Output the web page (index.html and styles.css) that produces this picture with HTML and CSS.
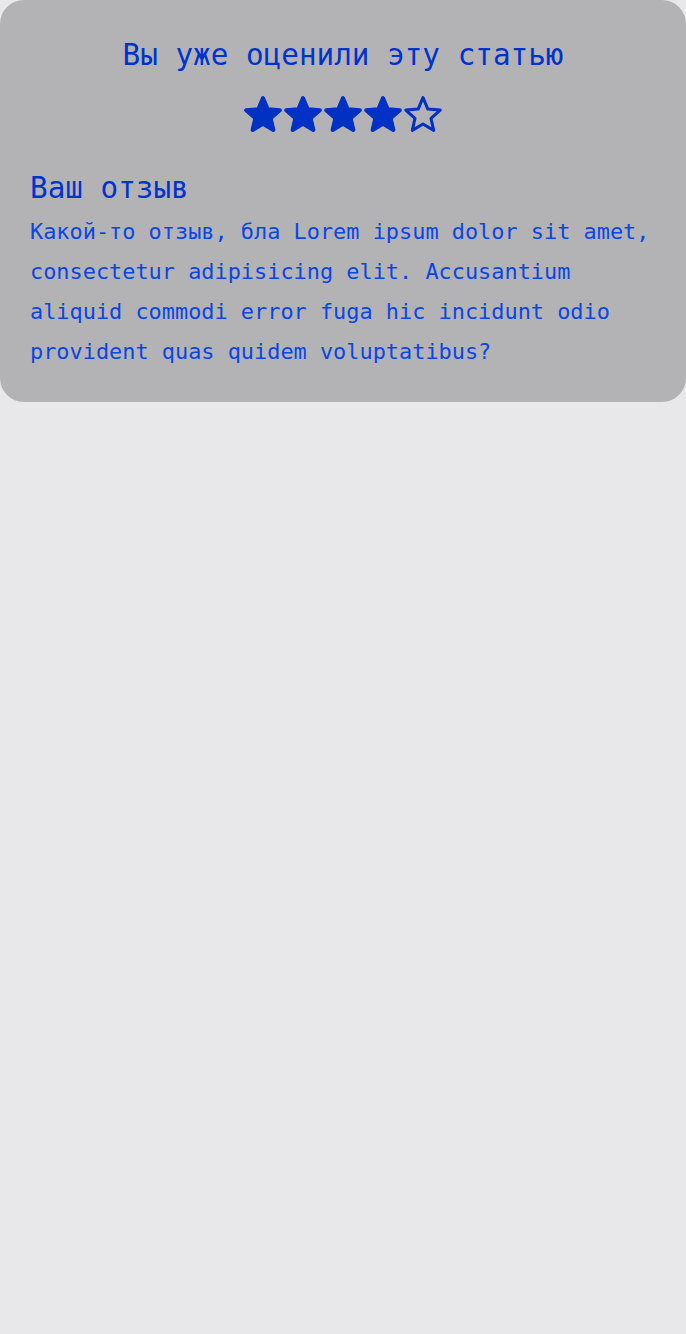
FILE: index.html
```html
<!DOCTYPE html>
<html lang="ru">
<head>
<meta charset="utf-8">
<title>Отзыв</title>
<link rel="stylesheet" href="styles.css">
</head>
<body>
<section class="card">
  <h1 class="title">Вы уже оценили эту статью</h1>
  <div class="stars">
    <svg class="star" viewBox="0 0 40 40"><polygon class="full" points="20,4 24.7,15.23 36.83,16.23 27.61,24.17 30.4,36.02 20,29.7 9.6,36.02 12.39,24.17 3.17,16.23 15.3,15.23"/></svg>
    <svg class="star" viewBox="0 0 40 40"><polygon class="full" points="20,4 24.7,15.23 36.83,16.23 27.61,24.17 30.4,36.02 20,29.7 9.6,36.02 12.39,24.17 3.17,16.23 15.3,15.23"/></svg>
    <svg class="star" viewBox="0 0 40 40"><polygon class="full" points="20,4 24.7,15.23 36.83,16.23 27.61,24.17 30.4,36.02 20,29.7 9.6,36.02 12.39,24.17 3.17,16.23 15.3,15.23"/></svg>
    <svg class="star" viewBox="0 0 40 40"><polygon class="full" points="20,4 24.7,15.23 36.83,16.23 27.61,24.17 30.4,36.02 20,29.7 9.6,36.02 12.39,24.17 3.17,16.23 15.3,15.23"/></svg>
    <svg class="star" viewBox="0 0 40 40"><polygon class="empty" points="20,3.6 24.85,15.1 37.25,16.1 28.0,24.3 30.7,36.4 20,30 9.3,36.4 12.0,24.3 2.75,16.1 15.15,15.1"/></svg>
  </div>
  <h2 class="subtitle">Ваш отзыв</h2>
  <p class="review">Какой-то отзыв, бла Lorem ipsum dolor sit amet, consectetur adipisicing elit. Accusantium aliquid commodi error fuga hic incidunt odio provident quas quidem voluptatibus?</p>
</section>
</body>
</html>
```

FILE: styles.css
```css
html, body {
  margin: 0;
  padding: 0;
}
body {
  background: #e8e8ea;
  font-family: "DejaVu Sans Mono", "Liberation Mono", monospace;
  min-height: 1334px;
}
.card {
  background: #b3b3b5;
  border-radius: 0 0 24px 24px;
  border-top-left-radius: 24px;
  border-top-right-radius: 24px;
  padding: 37px 30px 30px;
  display: flex;
  flex-direction: column;
}
.title {
  margin: 0;
  font-size: 29.3px;
  line-height: 36px;
  font-weight: normal;
  text-align: center;
  color: #0033cc;
}
.stars {
  margin-top: 21px;
  display: flex;
  justify-content: center;
}
.star {
  width: 40px;
  height: 40px;
  display: block;
}
.full {
  fill: #0030c4;
  stroke: #0030c4;
  stroke-width: 4;
  stroke-linejoin: round;
}
.empty {
  fill: none;
  stroke: #0030c4;
  stroke-width: 3;
  stroke-linejoin: round;
}
.subtitle {
  margin: 36px 0 0;
  font-size: 29.3px;
  line-height: 36px;
  font-weight: normal;
  color: #0033cc;
}
.review {
  margin: 6px 0 0;
  font-size: 21.9px;
  line-height: 40px;
  color: #0a46e6;
}
```
